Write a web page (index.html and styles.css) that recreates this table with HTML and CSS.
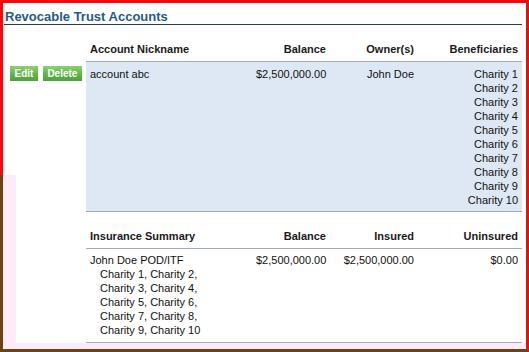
FILE: index.html
```html
<!DOCTYPE html>
<html>
<head>
<meta charset="utf-8">
<link rel="stylesheet" href="styles.css">
</head>
<body>
<div class="frame">
  <div class="frame-left"></div>
  <div class="content">
    <h2 class="title">Revocable Trust Accounts</h2>

    <div class="grid accounts">
      <div class="act"></div>
      <div class="th">Account Nickname</div>
      <div class="th num">Balance</div>
      <div class="th num">Owner(s)</div>
      <div class="th num">Beneficiaries</div>

      <div class="act act-btns">
        <button class="btn">Edit</button>
        <button class="btn">Delete</button>
      </div>
      <div class="td shade">account abc</div>
      <div class="td shade num">$2,500,000.00</div>
      <div class="td shade num">John Doe</div>
      <div class="td shade num lines">
        <span>Charity 1</span><span>Charity 2</span><span>Charity 3</span><span>Charity 4</span><span>Charity 5</span>
        <span>Charity 6</span><span>Charity 7</span><span>Charity 8</span><span>Charity 9</span><span>Charity 10</span>
      </div>
    </div>

    <div class="grid insurance">
      <div class="act"></div>
      <div class="th">Insurance Summary</div>
      <div class="th num">Balance</div>
      <div class="th num">Insured</div>
      <div class="th num">Uninsured</div>

      <div class="act"></div>
      <div class="td td-ins lines">
        <span>John Doe POD/ITF</span>
        <span class="indent">Charity 1, Charity 2,</span>
        <span class="indent">Charity 3, Charity 4,</span>
        <span class="indent">Charity 5, Charity 6,</span>
        <span class="indent">Charity 7, Charity 8,</span>
        <span class="indent">Charity 9, Charity 10</span>
      </div>
      <div class="td td-ins num">$2,500,000.00</div>
      <div class="td td-ins num">$2,500,000.00</div>
      <div class="td td-ins num">$0.00</div>
    </div>
  </div>
</div>
</body>
</html>
```

FILE: styles.css
```css
html, body {
  margin: 0;
  padding: 0;
  background: #fff;
}

.frame {
  display: flex;
  width: 529px;
  height: 352px;
  box-sizing: border-box;
  border-top: 3px solid #f00c0c;
  border-right: 3px solid #dc1414;
  border-bottom: 3px solid #6c4215;
  font-family: "Liberation Sans", Arial, sans-serif;
  color: #111;
}

.frame-left {
  width: 3px;
  flex: none;
  background: linear-gradient(#f00c0c 0 172px, #6c4215 172px);
}

.content {
  flex: 1;
  padding: 0 4px 0 1px;
  background:
    linear-gradient(#fcecf9, #fcecf9) left bottom / 13px 174px no-repeat,
    linear-gradient(#fcecf9, #fcecf9) left bottom / 100% 6px no-repeat,
    #fff;
}

.title {
  margin: 0;
  padding: 6px 0 0 1px;
  font-size: 13px;
  line-height: 15px;
  font-weight: bold;
  color: #285a86;
  border-bottom: 1px solid #2a4048;
}

.grid {
  display: grid;
  grid-template-columns: 82px 166px 78px 88px 104px;
  font-size: 11px;
  line-height: 14px;
}

.accounts {
  margin-top: 12px;
}

.insurance {
  margin-top: 12px;
}

.th {
  font-weight: bold;
  color: #1a1a1a;
  padding: 5px 4px;
  border-bottom: 1px solid #a3abb4;
}

.td {
  padding: 5px 4px 4px 4px;
  border-bottom: 1px solid #a3abb4;
}

.td-ins {
  padding: 4px 4px 5px 4px;
}

.shade {
  background: #dee8f4;
}

.num {
  text-align: right;
}

.lines {
  display: flex;
  flex-direction: column;
}

.lines.num {
  align-items: flex-end;
}

.indent {
  padding-left: 10px;
}

.act-btns {
  display: flex;
  align-items: flex-start;
  gap: 5px;
  padding: 4px 0 0 6px;
}

.btn {
  margin: 0;
  border: none;
  height: 15px;
  padding: 0 4.5px;
  font-family: "Liberation Sans", Arial, sans-serif;
  font-size: 10px;
  font-weight: bold;
  line-height: 15px;
  color: #fff;
  background: linear-gradient(#8ed174, #5fb447 55%, #4fa439);
  border-radius: 0;
}
```
